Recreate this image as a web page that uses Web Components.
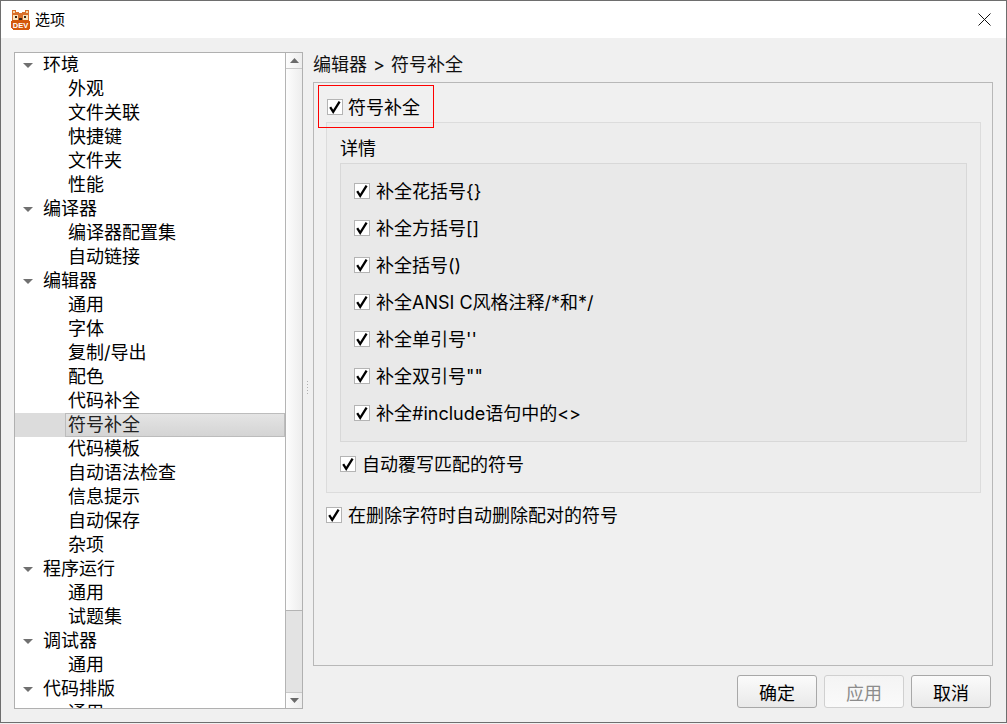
<!DOCTYPE html>
<html>
<head>
<meta charset="utf-8">
<title>选项</title>
<style>
  html, body { margin: 0; padding: 0; height: 100%; overflow: hidden; background: #f0f0f0; }
  body { font-family: Inter, "Noto Sans CJK SC", sans-serif; }
</style>
</head>
<body>
<options-window>
  <span slot="title">选项</span>
  <option-tree slot="tree"></option-tree>
  <span slot="crumb">编辑器 &gt; 符号补全</span>
  <div slot="page">
    <opt-group outer>
      <opt-check slot="head" style="margin:0 0 0 13px;height:30px;--gap:5px">符号补全</opt-check>
      <opt-group details label="详情">
        <opt-group inner>
          <opt-check>补全花括号{}</opt-check>
          <opt-check>补全方括号[]</opt-check>
          <opt-check>补全括号()</opt-check>
          <opt-check>补全ANSI C风格注释/*和*/</opt-check>
          <opt-check>补全单引号''</opt-check>
          <opt-check>补全双引号""</opt-check>
          <opt-check>补全#include语句中的&lt;&gt;</opt-check>
        </opt-group>
        <opt-check slot="after">自动覆写匹配的符号</opt-check>
      </opt-group>
      <opt-check slot="tail">在删除字符时自动删除配对的符号</opt-check>
    </opt-group>
  </div>
  <opt-button slot="buttons">确定</opt-button>
  <opt-button slot="buttons" disabled>应用</opt-button>
  <opt-button slot="buttons">取消</opt-button>
</options-window>

<script>
// main dialog frame: title bar, tree on the left, page on the right, buttons below
const windowTemplate = document.createElement('template');
windowTemplate.innerHTML = `
  <style>
    :host {
      display: flex;
      flex-direction: column;
      box-sizing: border-box;
      width: 1007px;
      height: 723px;
      border: 1px solid #6e6e6e;
      background: #f0f0f0;
      color: #000;
      position: relative;
    }
    .title {
      display: flex;
      align-items: center;
      height: 37px;
      flex: none;
      background: #fff;
      padding-left: 9px;
      font-size: 15px;
      gap: 4px;
    }
    .title svg { flex: none; }
    .caption { padding-bottom: 2px; }
    .close { margin-left: auto; margin-right: 15px; display: flex; }
    .main {
      flex: 1;
      display: grid;
      grid-template-columns: 289px 10px 680px;
      padding: 14px 12px 0 13px;
      min-height: 0;
    }
    .split { display: flex; flex-direction: column; align-items: center; justify-content: center; gap: 2px; padding-right: 2px; }
    .split i { width: 1px; height: 1px; background: #b0b0b0; }
    .right { display: flex; flex-direction: column; min-height: 0; }
    .crumb { height: 30px; font-size: 18px; line-height: 26px; color: #111; flex: none; word-spacing: 1px; }
    .page { flex: 1; min-height: 0; display: flex; }
    .buttons { display: flex; gap: 7px; justify-content: flex-end; margin: 9px 2px 14px 0; flex: none; }
    ::slotted([slot=tree]) { height: 657px; }
    ::slotted([slot=page]) { flex: 1; display: flex; }
  </style>
  <div class="title">
    <svg width="21" height="21" viewBox="0 0 21 21" shape-rendering="crispEdges">
      <path d="M2 1h4v2h3v1h3V3h3V1h4v10H2z" fill="#d9702a"/>
      <path d="M3 2h2v2H3zM16 2h2v2h-2z" fill="#f7d9a8"/>
      <path d="M3 6h5v5H3zM13 6h5v5h-5z" fill="#f9e3bd"/>
      <path d="M5 7h2v2H5zM14 7h2v2h-2zM9 9h3v2H9z" fill="#3a2413"/>
      <path d="M2 11h17v1h1v7l-2 2H3l-2-2v-7h1z" fill="#d4580c"/>
      <text x="10.5" y="18.5" text-anchor="middle" font-family="Liberation Sans" font-weight="700" font-size="7.5" fill="#fff">DEV</text>
    </svg>
    <span class="caption"><slot name="title"></slot></span>
    <span class="close">
      <svg width="13" height="13" viewBox="0 0 13 13"><path d="M.5.5l12 12M12.5.5l-12 12" stroke="#111" stroke-width="1" fill="none"/></svg>
    </span>
  </div>
  <div class="main">
    <slot name="tree"></slot>
    <div class="split"><i></i><i></i><i></i><i></i><i></i></div>
    <div class="right">
      <div class="crumb"><slot name="crumb"></slot></div>
      <div class="page"><slot name="page"></slot></div>
      <div class="buttons"><slot name="buttons"></slot></div>
    </div>
  </div>
`;
class OptionsWindow extends HTMLElement {
    constructor() {
        super();
        this.attachShadow({ mode: 'open' }).appendChild(windowTemplate.content.cloneNode(true));
    }
}
customElements.define('options-window', OptionsWindow);

// one line of the tree
const rowTemplate = document.createElement('template');
rowTemplate.innerHTML = `
  <style>
    :host {
      display: flex;
      align-items: center;
      height: 24px;
      flex: none;
      box-sizing: border-box;
      font-size: 18px;
      white-space: nowrap;
      color: #000;
    }
    .arrow { width: 28px; flex: none; display: flex; padding-left: 8px; box-sizing: border-box; }
    .text { line-height: 18px; padding-bottom: 1px; }
    :host([child]) .text { padding-left: 25px; }
    :host([selected]) { position: relative; background: #dcdcdc; }
    :host([selected]) .text { color: #222; position: relative; }
    :host([selected]) .box {
      position: absolute; left: 50px; right: 0; top: 0; height: 24px; box-sizing: border-box;
      border: 1px solid #bcbcbc; background: linear-gradient(#e4e4e4, #d4d4d4);
    }
  </style>
  <span class="box"></span>
  <span class="arrow"></span>
  <span class="text"><slot></slot></span>
`;
class TreeRow extends HTMLElement {
    constructor() {
        super();
        this.attachShadow({ mode: 'open' }).appendChild(rowTemplate.content.cloneNode(true));
    }

    connectedCallback() {
        if (!this.hasAttribute('child')) {
            this.shadowRoot.querySelector('.arrow').innerHTML =
                '<svg width="10" height="5" viewBox="0 0 10 5"><path d="M0 0h10L5 5z" fill="#707070"/></svg>';
        }
    }
}
customElements.define('tree-row', TreeRow);

// scrollbar on the right of the tree
const scrollTemplate = document.createElement('template');
scrollTemplate.innerHTML = `
  <style>
    :host {
      display: flex;
      flex-direction: column;
      width: 17px;
      flex: none;
      box-sizing: border-box;
      border-left: 1px solid #b4b4b4;
      background: linear-gradient(90deg, #fdfdfd, #ededed);
    }
    .btn { height: 15px; flex: none; display: flex; align-items: center; justify-content: center; }
    .btn.up { border-bottom: 1px solid #c8c8c8; }
    .btn.down { border-top: 1px solid #c8c8c8; }
    .track { flex: 1; display: flex; flex-direction: column; justify-content: flex-end; }
    .thumb { height: 81px; background: #e3e3e3; border-top: 1px solid #b4b4b4; }
  </style>
  <div class="btn up"><svg width="9" height="5" viewBox="0 0 9 5"><path d="M4.5 0L9 5H0z" fill="#6a6a6a"/></svg></div>
  <div class="track"><div class="thumb"></div></div>
  <div class="btn down"><svg width="9" height="5" viewBox="0 0 9 5"><path d="M0 0h9L4.5 5z" fill="#6a6a6a"/></svg></div>
`;
class TreeScroll extends HTMLElement {
    constructor() {
        super();
        this.attachShadow({ mode: 'open' }).appendChild(scrollTemplate.content.cloneNode(true));
    }
}
customElements.define('tree-scroll', TreeScroll);

// settings tree, filled from a list
const TREE_ITEMS = [
    ['环境', '外观', '文件关联', '快捷键', '文件夹', '性能'],
    ['编译器', '编译器配置集', '自动链接'],
    ['编辑器', '通用', '字体', '复制/导出', '配色', '代码补全', '符号补全', '代码模板', '自动语法检查', '信息提示', '自动保存', '杂项'],
    ['程序运行', '通用', '试题集'],
    ['调试器', '通用'],
    ['代码排版', '通用']
];
const treeTemplate = document.createElement('template');
treeTemplate.innerHTML = `
  <style>
    :host {
      display: flex;
      box-sizing: border-box;
      width: 289px;
      border: 1px solid #b0b0b0;
      background: #fff;
      overflow: hidden;
    }
    .rows { flex: 1; min-width: 0; overflow: hidden; display: flex; flex-direction: column; }
  </style>
  <div class="rows"></div>
  <tree-scroll></tree-scroll>
`;
class OptionTree extends HTMLElement {
    constructor() {
        super();
        const root = this.attachShadow({ mode: 'open' });
        root.appendChild(treeTemplate.content.cloneNode(true));
        const rows = root.querySelector('.rows');
        for (const group of TREE_ITEMS) {
            group.forEach((label, i) => {
                const row = document.createElement('tree-row');
                row.textContent = label;
                if (i > 0) row.setAttribute('child', '');
                if (label === '符号补全') row.setAttribute('selected', '');
                rows.appendChild(row);
            });
        }
    }
}
customElements.define('option-tree', OptionTree);

// checkbox with label, always ticked in this page
const checkTemplate = document.createElement('template');
checkTemplate.innerHTML = `
  <style>
    :host {
      display: flex;
      align-items: center;
      gap: var(--gap, 6px);
      font-size: 18px;
      height: 37px;
      white-space: nowrap;
      color: #000;
    }
    .box {
      width: 16px; height: 16px; flex: none; box-sizing: border-box;
      border: 1px solid #b4b4b4; background: #fff; display: flex; align-items: center; justify-content: center;
    }
    .text { padding-bottom: 2px; }
  </style>
  <span class="box"><svg width="14" height="14" viewBox="0 0 14 14"><path d="M2.2 7.2l3 4.6L11.6 1.6" fill="none" stroke="#000" stroke-width="2.3"/></svg></span>
  <span class="text"><slot></slot></span>
`;
class OptCheck extends HTMLElement {
    constructor() {
        super();
        this.attachShadow({ mode: 'open' }).appendChild(checkTemplate.content.cloneNode(true));
    }
}
customElements.define('opt-check', OptCheck);

// group frames, three looks: outer page frame, details group, inner list
const groupTemplate = document.createElement('template');
groupTemplate.innerHTML = `
  <style>
    :host { display: block; box-sizing: border-box; position: relative; }
    :host([outer]) {
      flex: 1; width: 680px; height: 584px; border: 1px solid #b8b8b8; padding: 9px 0 0 0;
    }
    :host([details]) {
      width: 655px; height: 371px; margin: 0 0 0 12px; border: 1px solid #dcdcdc; background: #ededed;
      padding: 9px 13px 0 13px;
    }
    :host([inner]) {
      width: 627px; height: 279px; border: 1px solid #d8d8d8; background: #e9e9e9;
      padding: 8.5px 0 0 13px;
    }
    .label { font-size: 18px; height: 31px; box-sizing: border-box; padding-top: 2px; line-height: 29px; color: #000; }
    .label:empty { display: none; }
    .after { display: none; }
    :host([details]) .after { display: block; padding-top: 3.5px; }
    .tail { display: block; margin: 3.5px 0 0 12px; }
    .mark {
      position: absolute; left: 4px; top: 2px; width: 116px; height: 43px; box-sizing: border-box;
      border: 1px solid #f00; pointer-events: none; z-index: 2;
    }
    :host(:not([outer])) .mark { display: none; }
  </style>
  <div class="mark"></div>
  <slot name="head"></slot>
  <div class="label"></div>
  <slot></slot>
  <div class="after"><slot name="after"></slot></div>
  <div class="tail"><slot name="tail"></slot></div>
`;
class OptGroup extends HTMLElement {
    constructor() {
        super();
        const root = this.attachShadow({ mode: 'open' });
        root.appendChild(groupTemplate.content.cloneNode(true));
        root.querySelector('.label').textContent = this.getAttribute('label') || '';
    }
}
customElements.define('opt-group', OptGroup);

// push button
const buttonTemplate = document.createElement('template');
buttonTemplate.innerHTML = `
  <style>
    :host {
      display: flex;
      align-items: center;
      justify-content: center;
      width: 80px;
      height: 33px;
      box-sizing: border-box;
      border: 1px solid #a8a8a8;
      border-radius: 3px;
      background: linear-gradient(#fbfbfb, #e9e9e9);
      font-size: 18px;
      color: #000;
    }
    :host([disabled]) {
      border-color: #d0d0d0;
      background: linear-gradient(#f4f4f4, #fafafa);
      color: #8c8c8c;
    }
  </style>
  <slot></slot>
`;
class OptButton extends HTMLElement {
    constructor() {
        super();
        this.attachShadow({ mode: 'open' }).appendChild(buttonTemplate.content.cloneNode(true));
    }
}
customElements.define('opt-button', OptButton);
</script>
</body>
</html>
